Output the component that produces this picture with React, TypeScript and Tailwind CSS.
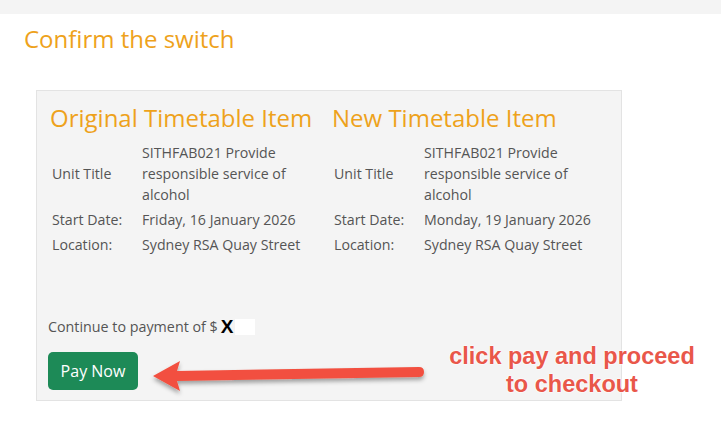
import React from 'react';

const rows = (date: string) => [
  { label: 'Unit Title', value: 'SITHFAB021 Provide responsible service of alcohol' },
  { label: 'Start Date:', value: date },
  { label: 'Location:', value: 'Sydney RSA Quay Street' },
];

function ItemColumn({ title, date }: { title: string; date: string }) {
  return (
    <div className="w-[282px] shrink-0">
      <h2 className="text-[24px] leading-[30px] text-[#eea21b] whitespace-nowrap">{title}</h2>
      <table className="mt-[7px] ml-[2px] text-[14.2px] leading-[21px] text-[#555]">
        <tbody>
          {rows(date).map((r) => (
            <tr key={r.label}>
              <td className="w-[90px] align-middle py-[2px]">{r.label}</td>
              <td className="w-[172px] align-middle py-[2px]">{r.value}</td>
            </tr>
          ))}
        </tbody>
      </table>
    </div>
  );
}

function App() {
  return (
    <div className="relative w-[721px] h-[431px] bg-white overflow-hidden" style={{ fontFamily: '"Open Sans", sans-serif' }}>
      <div className="h-[14px] bg-[#f4f4f4]" />
      <div className="pl-[24px] pt-[10px]">
        <h1 className="text-[24px] leading-[30px] text-[#eea21b]">Confirm the switch</h1>
      </div>
      <div className="ml-[36px] mt-[36px] w-[586px] h-[311px] bg-[#f4f4f4] border border-[#e3e3e3] pl-[13px] pt-[12px] flex flex-col">
        <div className="flex">
          <ItemColumn title="Original Timetable Item" date="Friday, 16 January 2026" />
          <ItemColumn title="New Timetable Item" date="Monday, 19 January 2026" />
        </div>
        <div className="mt-auto pb-[10px] -ml-[2px]">
          <div className="flex items-center text-[14.3px] leading-[20px] text-[#555]">
            <span>Continue to payment of $</span>
            <span className="ml-[3px] text-[19px] font-black text-black" style={{ fontFamily: '"Liberation Sans", Arial, sans-serif' }}>X</span>
            <span className="ml-[2px] w-[20px] h-[16px] bg-white" />
          </div>
          <button className="mt-[15px] w-[90px] h-[38px] rounded-[5px] bg-[#1d8a57] text-white text-[16px]">Pay Now</button>
        </div>
      </div>

      <svg className="absolute left-0 top-0" width="721" height="431" viewBox="0 0 721 431">
        <defs>
          <filter id="sh" x="-10%" y="-50%" width="120%" height="200%">
            <feDropShadow dx="0" dy="3" stdDeviation="2" floodColor="#000" floodOpacity="0.35" />
          </filter>
        </defs>
        <g filter="url(#sh)">
          <path d="M153 376 L180 361 L177 371 L419 367 Q424 367 424 372 Q424 377 419 377 L177 381 L180 391 Z" fill="#f2503f" />
        </g>
      </svg>

      <div
        className="absolute left-[412px] top-[342px] w-[320px] text-center text-[23.5px] leading-[28px] font-bold text-[#e9574a]"
        style={{ fontFamily: '"Liberation Sans", Arial, sans-serif', textShadow: '0 0 2px #fff, 0 0 2px #fff, 0 0 2px #fff' }}
      >
        click pay and proceed
        <br />
        to checkout
      </div>
    </div>
  );
}

export default App;
